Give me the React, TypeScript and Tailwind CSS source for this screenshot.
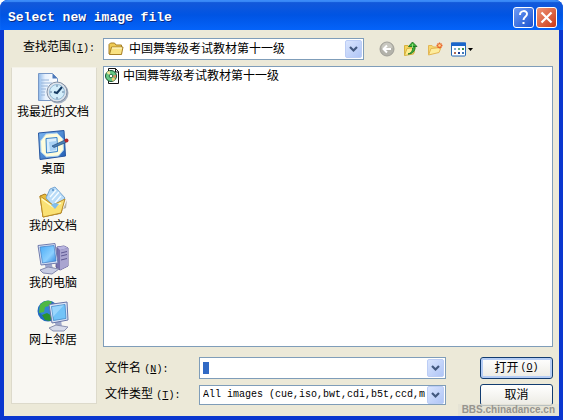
import React from 'react';

const Chevron = () => (
  <svg width="17" height="18" viewBox="0 0 17 18" aria-hidden="true">
    <defs>
      <linearGradient id="chev" x1="0" y1="0" x2="1" y2="1">
        <stop offset="0" stopColor="#dbe6fe" />
        <stop offset="1" stopColor="#aec4f6" />
      </linearGradient>
    </defs>
    <rect x="0.5" y="0.5" width="16" height="17" rx="1.5" fill="url(#chev)" stroke="#bccdf5" />
    <path d="M5 7l3.5 3.5L12 7" fill="none" stroke="#43597f" strokeWidth="2.2" />
  </svg>
);

const FolderIcon = () => (
  <svg width="16" height="16" viewBox="0 0 16 16" aria-hidden="true">
    <path d="M1 13V3.5L2.5 2h4L8 4h5.500v9z" fill="#efcb55" stroke="#a98128" />
    <path d="M1.500 13.500L3.500 6h11.500l-1.500 7.500z" fill="#f9e283" stroke="#a98128" />
    <path d="M4 7h10" stroke="#fffbd8" />
  </svg>
);

const DiscIcon = () => (
  <svg width="16" height="16" viewBox="0 0 16 16" aria-hidden="true">
    <path d="M3.500 0.500h7l3 3v12h-10z" fill="#fff" stroke="#111" />
    <path d="M10.500 .5v3.500h3" fill="none" stroke="#111" />
    <circle cx="6" cy="8" r="5.500" fill="#67c987" stroke="#174e2c" />
    <path d="M6 8L1.500 5A5.500 5.500 0 0 1 4.500 2.800z" fill="#f3e79a" />
    <path d="M6 8L10.500 11a5.500 5.500 0 0 1-3 2.200z" fill="#f3cf72" />
    <path d="M6 8l5-1v3z" fill="#e08a62" />
    <circle cx="6" cy="8" r="1.800" fill="#fff" stroke="#2c6f45" />
  </svg>
);

const BackIcon = () => (
  <svg width="16" height="16" viewBox="0 0 16 16" aria-hidden="true">
    <circle cx="8" cy="8" r="7" fill="#b3b2aa" stroke="#a09f98" />
    <path d="M2.500 7a5.500 5.500 0 0 1 11 0" fill="#c9c8c0" />
    <path d="M12 8H5M8 4.500L4.500 8 8 11.500" fill="none" stroke="#fff" strokeWidth="2" />
  </svg>
);

const UpIcon = () => (
  <svg width="16" height="16" viewBox="0 0 16 16" aria-hidden="true">
    <path d="M1.500 14V4.500h3.500l1 1.500h5v6z" fill="#f5d45f" stroke="#d8b23f" />
    <path d="M1.500 14.500L4 7.500l8-1-1.500 6.500z" fill="#fdee92" stroke="#d8b23f" />
    <path d="M5 13c3.500-1 5-3.500 4.500-7.500H12c.5 4-2 7.500-7 7.500z" fill="#3fb43a" stroke="#176b1d" strokeWidth=".8" />
    <path d="M5.500 5.500L9.500 1l4.500 4.500z" fill="#3fb43a" stroke="#176b1d" strokeWidth=".8" />
    <path d="M9.500 3v4" stroke="#8fe07a" strokeWidth="1" />
  </svg>
);

const NewFolderIcon = () => (
  <svg width="16" height="16" viewBox="0 0 16 16" aria-hidden="true">
    <path d="M1.500 13.500V4.500H5l1.500 1.500H11v5z" fill="#f7d86e" stroke="#e3b654" />
    <path d="M1.500 14L4 7.500l10-1-2 5z" fill="#fdec9c" stroke="#e3b654" />
    <path d="M12.500 1.500v6M9.500 4.500h6M10.500 2.500l4 4M14.500 2.500l-4 4" stroke="#e9672b" strokeWidth="1.300" />
    <circle cx="12.500" cy="4.500" r="1.300" fill="#ffd88a" />
  </svg>
);

const ViewIcon = () => (
  <svg width="23" height="15" viewBox="0 0 23 15" aria-hidden="true">
    <rect x="0.500" y="1" width="14" height="13" rx="1" fill="#fff" stroke="#2467b4" />
    <path d="M0 .5h15V4H0z" fill="#1c67ca" />
    <path d="M3 6h2v2H3z" fill="#7eacd3" />
    <path d="M7 6h2v2H7z" fill="#6fae86" />
    <path d="M11 6h2v2h-2z" fill="#3e8d4d" />
    <path d="M3 10h2v2H3z" fill="#b06a55" />
    <path d="M7 10h2v2H7z" fill="#1d3e90" />
    <path d="M11 10h2v2h-2z" fill="#3f78bd" />
    <path d="M17 6h5l-2.500 3z" fill="#000" />
  </svg>
);

const RecentIcon = () => (
  <svg width="32" height="32" viewBox="0 0 32 32" aria-hidden="true">
    <defs>
      <linearGradient id="paper" x1="0" x2="1">
        <stop offset="0" stopColor="#8db8ea" />
        <stop offset=".35" stopColor="#e7f1fd" />
        <stop offset="1" stopColor="#fff" />
      </linearGradient>
    </defs>
    <path d="M1.500 1.500h14l5 5v22h-19z" fill="url(#paper)" stroke="#7898c6" />
    <path d="M15.500 1.500v5h5z" fill="#4d79b9" />
    <path d="M4 8h8M4 11h11M4 14h7M4 17h5M4 20h4M4 23h4" stroke="#98b4d9" />
    <circle cx="21" cy="21" r="10.500" fill="#a5b1c2" />
    <circle cx="20" cy="20" r="10" fill="#dce3ec" stroke="#8491a5" />
    <circle cx="20" cy="20" r="7.500" fill="#d3edfa" stroke="#93b9d5" />
    <path d="M25 15l-5 6-3-1" fill="none" stroke="#173c63" strokeWidth="2" />
    <path d="M20 13v2M20 25v2M13 20h2M25 20h2" stroke="#5e7b9b" />
  </svg>
);

const DesktopIcon = () => (
  <svg width="32" height="32" viewBox="0 0 32 32" aria-hidden="true">
    <defs>
      <linearGradient id="desk" x1="0" y1="0" x2="1" y2="1">
        <stop offset="0" stopColor="#7bb7f2" />
        <stop offset="1" stopColor="#225db4" />
      </linearGradient>
    </defs>
    <path d="M1.500 4L27 1.500l1.500 25.500L3 30.500z" fill="url(#desk)" stroke="#2857a0" />
    <path d="M9 5l11-1 6 6 .5 11-5 6-12 1-5.500-5L3.500 12z" fill="#fffddc" stroke="#aad0ef" />
    <path d="M9 9.500l11-1 .5 14L9.500 24z" fill="#d9eefc" stroke="#3682ca" />
    <path d="M12 13l7-1v9l-6 1z" fill="#a8d2f5" />
    <path d="M15 17l13-6 1 2.500-12 5z" fill="#4b80b5" stroke="#244d7b" strokeWidth=".7" />
    <circle cx="29.500" cy="11.500" r="2" fill="#b5292c" />
  </svg>
);

const DocumentsIcon = () => (
  <svg width="32" height="32" viewBox="0 0 32 32" aria-hidden="true">
    <path d="M6 31l23-9 1-8-6 14z" fill="#8d8878" opacity=".6" />
    <path d="M3 10l5-2 4 3 15 2-3 14-18 4z" fill="#e9bc3b" stroke="#a8791d" />
    <path d="M9 12L13 3l5-2 10 11-9 11z" fill="#b9dcf8" stroke="#78a7d3" />
    <path d="M13 11l6-7M15 14l7-8M18 17l6-7" stroke="#f6fcff" strokeWidth="1.300" />
    <circle cx="16" cy="4" r="1.200" fill="#6da2d4" />
    <path d="M3 10l13 9 12-6-4 14-18 4z" fill="#fae174" stroke="#bb8d29" />
    <path d="M5 13l11 8M16 21l8-4" stroke="#fffac4" strokeWidth="1.400" />
    <path d="M14 19l4 4 4-5-4-1z" fill="#80bdeb" />
  </svg>
);

const ComputerIcon = () => (
  <svg width="32" height="32" viewBox="0 0 32 32" aria-hidden="true">
    <defs>
      <linearGradient id="screen" x1="0" y1="0" x2="1" y2="1">
        <stop offset="0" stopColor="#48aaf5" />
        <stop offset=".6" stopColor="#8cd0ff" />
        <stop offset="1" stopColor="#3388df" />
      </linearGradient>
    </defs>
    <path d="M20 4l7-1 4 2v18l-8 4-4-3z" fill="#7771ae" stroke="#605b94" />
    <path d="M20 4l7-1 4 2-8 2z" fill="#b9b5df" />
    <path d="M23 7l8-2v18l-8 4z" fill="#aaa5d0" />
    <path d="M24 10l6-1.500M24 13l6-1.500M24 17l6-1.500" stroke="#5e5892" />
    <path d="M7 19l7-1 2 8h-7z" fill="#9ba5cd" />
    <path d="M3 27l8-3 11 2-7 5-9-1z" fill="#c7cce4" stroke="#8389ae" />
    <path d="M1 2.500l17-2 3 19.500L4 22z" fill="#d8e2f6" stroke="#707cae" />
    <path d="M3 4l14-1.500L19 18 5.500 20z" fill="url(#screen)" stroke="#3e7cc5" strokeWidth=".7" />
  </svg>
);

const NetworkIcon = () => (
  <svg width="32" height="32" viewBox="0 0 32 32" aria-hidden="true">
    <circle cx="11" cy="11" r="10.500" fill="#226bc2" />
    <circle cx="9" cy="9" r="7" fill="#4097df" opacity=".6" />
    <path d="M3 5c4-5 9-5 12-3l-3 4-4 1-1 5-5 1z" fill="#4eb845" />
    <path d="M5 15l5-2 5 3-2 5-5-1z" fill="#2c942c" />
    <path d="M17 19l7 1 1 7h-6z" fill="#9da7cb" />
    <path d="M12 28l7-3 12 2-4 4H16z" fill="#d7dbea" stroke="#8b91b0" />
    <path d="M12 4.500L30 2l1 18-16 3z" fill="#dce6f7" stroke="#6975a7" />
    <path d="M14.500 6.500L28 4.500l1 14-12.500 2z" fill="#72c3f7" stroke="#347dc0" strokeWidth=".7" />
    <path d="M15 7l12-2-11 12z" fill="#b5e3ff" opacity=".6" />
  </svg>
);

const places = [
  { name: '我最近的文档', Icon: RecentIcon },
  { name: '桌面', Icon: DesktopIcon },
  { name: '我的文档', Icon: DocumentsIcon },
  { name: '我的电脑', Icon: ComputerIcon },
  { name: '网上邻居', Icon: NetworkIcon },
];

const tools = [
  { name: 'Back', Icon: BackIcon },
  { name: 'Up one level', Icon: UpIcon },
  { name: 'New folder', Icon: NewFolderIcon },
  { name: 'Views', Icon: ViewIcon },
];

const mono = "font-['Liberation_Mono','Noto_Sans_CJK_SC',monospace] text-[10px]";
const field = 'relative flex items-center border border-[#7f9db9] bg-white';
const action =
  'flex h-[22px] w-full items-center justify-center rounded-[3px] border border-[#123c70] bg-linear-to-b from-white to-[#ecebe4]';

export default function App() {
  return (
    <main className="relative flex min-h-screen flex-col overflow-hidden rounded-t-lg bg-[#0a37cf] font-['Liberation_Sans','Noto_Sans_CJK_SC',sans-serif] text-xs leading-4 text-black">
      <header className="flex h-[30px] items-center justify-between bg-linear-to-b from-[#1559d8] via-[#0054e3] to-[#0463fa] pr-1.5 pl-2 shadow-[inset_0_2px_1px_#3b8bf8]">
        <h1 className="pt-1.5 font-['Liberation_Mono',monospace] text-[13px] font-bold text-white [text-shadow:1px_1px_0_#0a2a80]">
          Select new image file
        </h1>
        <div className="flex gap-0.5 pt-1">
          <button aria-label="Help" className="flex size-[21px] items-center justify-center rounded-[3px] border border-white bg-linear-to-br from-[#6e9bf5] to-[#1a50cf]">
            <svg width="15" height="17" viewBox="0 0 15 17">
              <path d="M4 6c0-5 7-5 7-1 0 3-3.500 2.500-3.500 6" fill="none" stroke="#fff" strokeWidth="2" />
              <path d="M6.500 13h2v2h-2z" fill="#fff" />
            </svg>
          </button>
          <button aria-label="Close" className="flex size-[21px] items-center justify-center rounded-[3px] border border-white bg-linear-to-br from-[#ee9374] to-[#c9350f]">
            <svg width="15" height="15" viewBox="0 0 15 15">
              <path d="M2.500 2.500l10 10M12.500 2.500l-10 10" stroke="#fff" strokeWidth="2.200" />
            </svg>
          </button>
        </div>
      </header>

      <div className="mx-1 mb-1 flex flex-1 flex-col bg-[#ece9d8] pt-2 pr-1.5 pb-2.5 pl-[7px]">
        <div className="flex items-center">
          <label htmlFor="look-in" className="w-[92px] shrink-0 pb-0.5 pl-3 whitespace-nowrap">
            查找范围<span className={mono}>(<u>I</u>):</span>
          </label>
          <div className={`${field} h-[22px] w-[261px] shrink-0`}>
            <select id="look-in" className="h-full w-full appearance-none bg-transparent pr-5 pl-[25px] outline-none">
              <option>中国舞等级考试教材第十一级</option>
            </select>
            <span className="pointer-events-none absolute left-1"><FolderIcon /></span>
            <span className="pointer-events-none absolute right-px"><Chevron /></span>
          </div>
          <div className="flex items-center gap-2 pl-[15px]">
            {tools.map(({ name, Icon }) => (
              <button key={name} aria-label={name}><Icon /></button>
            ))}
          </div>
        </div>

        <div className="flex flex-1 gap-1.5 pt-1.5">
          <nav className="mt-px mb-0.5 flex w-[86px] shrink-0 flex-col gap-[9px] border border-[#dddacb] border-t-[#f4f2e8] bg-[#f8f7f2] pt-1 pr-0.5">
            {places.map(({ name, Icon }) => (
              <button key={name} className="flex flex-col items-center whitespace-nowrap">
                <Icon />
                <span>{name}</span>
              </button>
            ))}
          </nav>

          <div className="flex min-w-0 flex-1 flex-col gap-2.5">
            <ul className="flex-1 border border-[#7f9db9] bg-white p-px">
              <li>
                <button className="flex items-center gap-0.5 whitespace-nowrap">
                  <DiscIcon />
                  <span>中国舞等级考试教材第十一级</span>
                </button>
              </li>
            </ul>

            <form className="grid grid-cols-[90px_minmax(0,1fr)_73px] items-center gap-x-0 gap-y-[5px]">
              <label htmlFor="file-name" className="pt-0.5 pl-0.5 whitespace-nowrap">
                文件名 <span className={mono}>(<u>N</u>):</span>
              </label>
              <div className={`${field} mr-[34px] ml-1.5 h-[22px] pl-[3px]`}>
                <span className="h-3 w-1.5 shrink-0 bg-[#316ac5]" />
                <input id="file-name" className="min-w-0 flex-1 bg-transparent outline-none" />
                <button type="button" aria-label="Recent names" className="mr-px"><Chevron /></button>
              </div>
              <button type="button" className={`${action} shadow-[inset_0_0_0_2px_#b5cdf5]`}>
                打开<span className={`${mono} pl-0.5`}>(<u>O</u>)</span>
              </button>

              <label htmlFor="file-type" className="pl-0.5 whitespace-nowrap">
                文件类型 <span className={mono}>(<u>T</u>):</span>
              </label>
              <div className={`${field} mr-[34px] ml-1.5 h-5`}>
                <select id="file-type" className={`${mono} h-full w-full appearance-none bg-transparent pr-4 pl-[3px] outline-none`}>
                  <option>All images (cue,iso,bwt,cdi,b5t,ccd,m</option>
                </select>
                <span className="pointer-events-none absolute right-px"><Chevron /></span>
              </div>
              <button type="button" className={action}>取消</button>
            </form>
          </div>
        </div>
      </div>
      <div className="absolute right-1 bottom-1 bg-[#e4e1d5]/80 px-1 font-['Liberation_Sans',sans-serif] text-[10px] leading-3 font-bold text-[#96948e]">
        BBS.chinadance.cn
      </div>
    </main>
  );
}
